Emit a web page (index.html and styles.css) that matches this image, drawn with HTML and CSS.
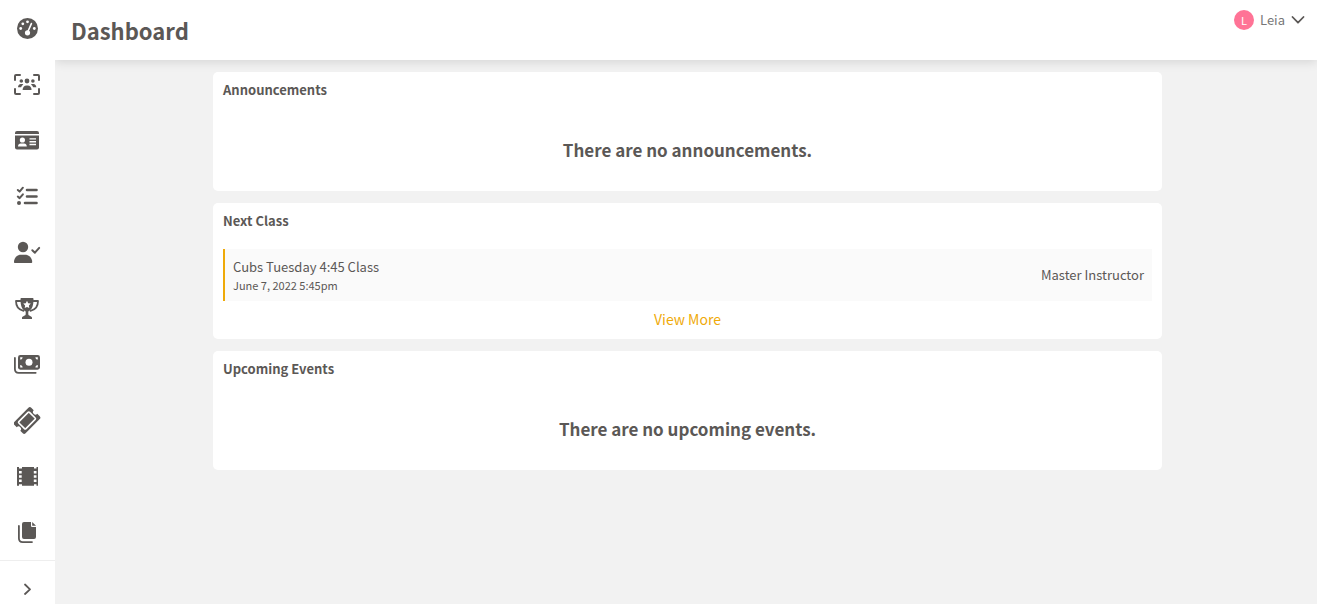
FILE: index.html
```html
<!DOCTYPE html>
<html lang="en">
<head>
  <meta charset="UTF-8" />
  <meta name="viewport" content="width=device-width, initial-scale=1.0" />
  <title>Dashboard</title>
  <link rel="stylesheet" href="styles.css">
</head>
<body>

  <aside class="sidebar">
    <nav>
      <a href="#" aria-label="Dashboard">
        <svg viewBox="0 0 27 28">
          <circle cx="13.5" cy="14.5" r="10.5" />
          <g class="cut">
            <circle cx="6.7" cy="14.5" r="1.4" />
            <circle cx="8.8" cy="9.8" r="1.4" />
            <circle cx="13.5" cy="7.8" r="1.4" />
            <circle cx="20.3" cy="14.5" r="1.4" />
            <circle cx="13.5" cy="18.8" r="2.6" />
          </g>
          <path class="cut-line" d="M17.4 9.6 13.7 18" />
        </svg>
      </a>
      <a href="#" aria-label="Groups">
        <svg viewBox="0 0 27 28">
          <path class="line" d="M1 10V6a1 1 0 0 1 1-1h4M20 5h4a1 1 0 0 1 1 1v4M25 19v4a1 1 0 0 1-1 1h-4M6 24H2a1 1 0 0 1-1-1v-4" />
          <circle cx="13" cy="11" r="2.4" />
          <circle cx="7.3" cy="11" r="1.8" />
          <circle cx="18.9" cy="11" r="1.8" />
          <path d="M8.6 20c0-2.8 1.6-4.6 4-4.6h1c2.4 0 4 1.8 4 4.6z" />
          <path d="M4 17.3c0-1.9 1.2-3.3 2.8-3.3h1.8l.7.4c-1.1.7-1.8 1.7-2.2 2.9zM22.3 17.3c0-1.9-1.2-3.3-2.8-3.3h-1.8l-.7.4c1.1.7 1.8 1.7 2.2 2.9z" />
        </svg>
      </a>
      <a href="#" aria-label="Membership">
        <svg viewBox="0 0 27 28">
          <path d="M3 5h20a2 2 0 0 1 2 2v1H1V7a2 2 0 0 1 2-2z" />
          <path d="M1 9.5h24v12a2 2 0 0 1-2 2H3a2 2 0 0 1-2-2z" />
          <g class="cut">
            <circle cx="8.4" cy="14" r="2.6" />
            <path d="M4 20.5c0-2 1.2-3 2.6-3h3.6c1.4 0 2.6 1 2.6 3z" />
            <path d="M15.5 12.2H22v1.4h-6.5zM15.5 15H22v1.4h-6.5zM15.500 17.8H22v1.4h-6.5z" />
          </g>
        </svg>
      </a>
      <a href="#" aria-label="Tasks">
        <svg viewBox="0 0 27 28">
          <path class="line thick" d="M13 8h9.500M13 14.500h9.500M11 21h11.500" />
          <path class="line" d="M3.800 8l1.800 1.600 3.300-3.900M3.800 14.600l1.800 1.600 3.300-3.900" />
          <circle cx="5" cy="21" r="2" />
        </svg>
      </a>
      <a href="#" aria-label="Attendance">
        <svg viewBox="0 0 27 28">
          <circle cx="9" cy="9" r="5.2" />
          <path d="M0 24c0-4.200 3-7.300 7-7.300h4c4 0 7.200 3.100 7.200 7.300 0 .6-.5 1-1 1H1c-.6 0-1-.4-1-1z" />
          <path class="line" d="M18.300 12.200l2.600 2.500 4.300-4.800" />
        </svg>
      </a>
      <a href="#" aria-label="Achievements">
        <svg viewBox="0 0 27 28">
          <path d="M7.500 4h11c.6 0 1 .4 1 1 0 6.200-1 10.200-5.200 12.400V20c0 2 3 1.800 3.700 3.500V25H8v-1.500C8.700 21.800 11.700 22 11.700 20v-2.600C7.500 15.200 6.500 11.200 6.500 5c0-.6.4-1 1-1z" />
          <path class="line thin" d="M6.500 7H2c0 5 2.500 8.800 7.500 9.800M19.500 7H24c0 5-2.500 8.800-7.500 9.800" />
          <path class="cut" d="M13 6.800l1.200 2.400 2.600.4-1.900 1.900.4 2.600-2.300-1.200-2.300 1.200.4-2.600-1.900-1.900 2.600-.4z" />
        </svg>
      </a>
      <a href="#" aria-label="Payments">
        <svg viewBox="0 0 27 28">
          <rect x="4" y="5" width="22" height="14.7" rx="2.4" />
          <path class="line thin" d="M.9 8v11c0 2.200 1.600 3.800 3.800 3.800h17" />
          <g class="cut">
            <circle cx="15" cy="12.300" r="3.500" />
            <path d="M6.200 7.200h2.400c0 1.300-1.100 2.400-2.400 2.400zM23.800 7.200h-2.400c0 1.300 1.100 2.400 2.400 2.400zM6.200 17.500h2.400c0-1.300-1.100-2.400-2.400-2.400zM23.800 17.500h-2.400c0-1.300 1.100-2.400 2.400-2.400z" />
          </g>
        </svg>
      </a>
      <a href="#" aria-label="Tickets">
        <svg viewBox="0 0 27 28">
          <g transform="translate(13 14.5) rotate(-45)">
            <path d="M-10-8h20a2 2 0 0 1 2 2v3.500a2.500 2.500 0 0 0 0 5V6a2 2 0 0 1-2 2h-20a2 2 0 0 1-2-2V2.500a2.500 2.500 0 0 0 0-5V-6a2 2 0 0 1 2-2z" />
            <rect class="cut-line" x="-7.5" y="-5" width="15" height="10" rx="1" />
          </g>
        </svg>
      </a>
      <a href="#" aria-label="Videos">
        <svg viewBox="0 0 27 28">
          <path d="M3 5h2v1.500h3V5h12v1.500h2.500V5H24v18.700h-1.500v-1.500H20v1.500H8v-1.500H5v1.500H3z" />
          <path class="cut" d="M5 9h2.700v2.500H5zM5 13.300h2.700v2.500H5zM5 17.600h2.700v2.500H5zM19.800 9h2.700v2.500h-2.700zM19.800 13.300h2.700v2.500h-2.700zM19.800 17.600h2.700v2.500h-2.700z" />
        </svg>
      </a>
      <a href="#" aria-label="Documents">
        <svg viewBox="0 0 27 28">
          <path d="M10 4h7v3.500c0 1 .5 1.500 1.500 1.500H22v10a2 2 0 0 1-2 2H10a2 2 0 0 1-2-2V6a2 2 0 0 1 2-2z" />
          <path d="M18.200 4l3.800 3.800h-3.800z" />
          <path class="line thin" d="M4.900 8v12.300c0 2.200 1.600 3.800 3.800 3.800H18" />
        </svg>
      </a>
    </nav>
    <button class="toggle" aria-label="Expand menu">
      <svg viewBox="0 0 10 12"><path class="line thin" d="M2 1.500 7 6.300 2 11" /></svg>
    </button>
  </aside>

  <div class="page">
    <header>
      <h1>Dashboard</h1>
      <button class="user">
        <span class="avatar">L</span>
        <span>Leia</span>
        <svg viewBox="0 0 14 10"><path class="line thin" d="M1.500 2 7 7.700 12.500 2" /></svg>
      </button>
    </header>

    <main>
      <section class="card">
        <h2>Announcements</h2>
        <p class="empty">There are no announcements.</p>
      </section>

      <section class="card">
        <h2>Next Class</h2>
        <div class="class-row">
          <div>
            <p>Cubs Tuesday 4:45 Class</p>
            <p class="date">June 7, 2022 5:45pm</p>
          </div>
          <p>Master Instructor</p>
        </div>
        <a class="more" href="#">View More</a>
      </section>

      <section class="card">
        <h2>Upcoming Events</h2>
        <p class="empty">There are no upcoming events.</p>
      </section>
    </main>
  </div>

</body>
</html>
```

FILE: styles.css
```css
* { box-sizing: border-box; margin: 0; padding: 0; }

body {
  display: flex;
  height: 100vh;
  font-family: 'Noto Sans CJK SC', 'Noto Sans', sans-serif;
  font-size: 13px;
  line-height: 20px;
  color: #5b5856;
  background: #f2f2f2;
}

button {
  border: none;
  background: none;
  font: inherit;
  color: inherit;
  cursor: pointer;
}

svg { display: block; fill: #5b5856; }

.line {
  fill: none;
  stroke: #5b5856;
  stroke-width: 2;
  stroke-linecap: round;
  stroke-linejoin: round;
}

.thin { stroke-width: 1.8; }
.thick { stroke-width: 2.6; }
.cut { fill: #fff; }
.cut-line { fill: none; stroke: #fff; stroke-width: 1.6; stroke-linecap: round; }

.sidebar {
  display: flex;
  flex-direction: column;
  flex: none;
  width: 55px;
  background: #fff;
  overflow: hidden;
}

.sidebar nav a {
  display: block;
  padding: 14px;
}

.sidebar nav svg { width: 27px; height: 28px; }

.toggle {
  display: flex;
  flex: 1;
  justify-content: center;
  align-items: flex-start;
  padding-top: 22px;
  border-top: 1px solid #eee;
}

.toggle svg { width: 10px; height: 12px; }

.page {
  display: flex;
  flex-direction: column;
  flex: 1;
}

header {
  display: flex;
  justify-content: space-between;
  align-items: flex-start;
  height: 60px;
  padding: 10px 12px 10px 16px;
  background: #fff;
  box-shadow: 0 2px 10px rgba(0, 0, 0, 0.12);
  clip-path: inset(0 0 -20px 0);
}

h1 { font-size: 22px; line-height: 40px; }

.user {
  display: flex;
  align-items: center;
  gap: 6px;
  color: #777;
}

.user svg { width: 14px; height: 10px; }

.avatar {
  width: 20px;
  height: 20px;
  border-radius: 50%;
  background: #ff7396;
  color: #fff;
  font-size: 11px;
  text-align: center;
}

main {
  display: flex;
  flex-direction: column;
  gap: 12px;
  padding: 12px 155px 12px 158px;
}

.card {
  padding: 8px 10px;
  border-radius: 5px;
  background: #fff;
}

h2 { font-size: 13px; line-height: 20px; }

.empty {
  padding: 36px 0 19px;
  font-size: 17px;
  line-height: 28px;
  font-weight: bold;
  text-align: center;
}

.class-row {
  display: flex;
  justify-content: space-between;
  align-items: center;
  margin-top: 18px;
  padding: 8px;
  border-left: 2px solid #efaa09;
  background: #fafafa;
}

.class-row .date { font-size: 11px; line-height: 16px; }

.more {
  display: block;
  padding: 8px 0 2px;
  color: #efaa09;
  font-size: 14px;
  text-align: center;
  text-decoration: none;
}
```
